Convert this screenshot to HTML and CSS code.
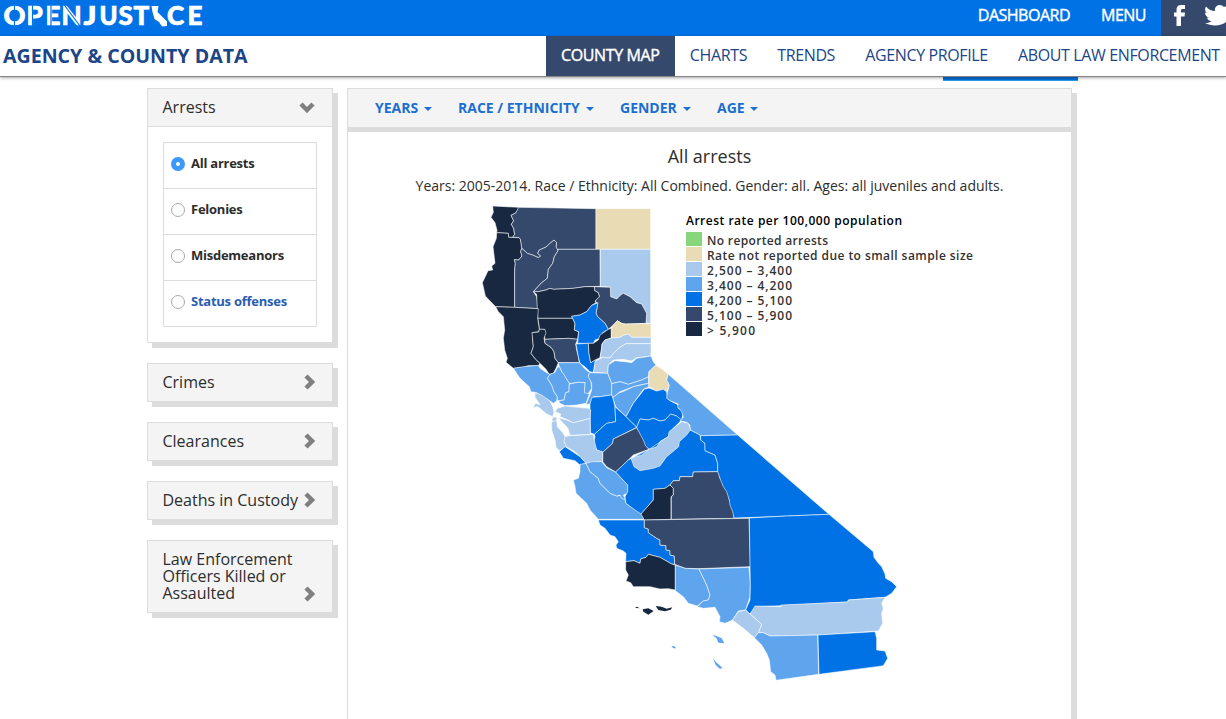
FILE: index.html
```html
<!DOCTYPE html>
<html lang="en">
<head>
<meta charset="utf-8">
<title>OpenJustice - Agency &amp; County Data</title>
<link rel="stylesheet" href="styles.css">
</head>
<body>
<header class="topbar">
  <svg class="logo" width="206" height="36" viewBox="0 0 206 36" role="img" aria-label="OpenJustice">
    <g class="logo-text">
      <text x="3.500" y="25" textLength="22" lengthAdjust="spacingAndGlyphs">O</text>
      <text x="26.500" y="25">P</text><text x="45.500" y="25">E</text><text x="61.500" y="25">N</text>
      <text x="83.500" y="25" textLength="13" lengthAdjust="spacingAndGlyphs">J</text>
      <text x="99.500" y="25" textLength="18" lengthAdjust="spacingAndGlyphs">U</text>
      <text x="118.500" y="25">S</text><text x="133.500" y="25">T</text>
      <text x="167" y="25">C</text><text x="187.500" y="25">E</text>
    </g>
    <path d="M14.500 4V27M32.500 4V27M51 4V27M63.500 4L81.500 28" stroke="#0072e6" stroke-width="1.200" fill="none"/>
    <path d="M151.500 6H158.500L157.500 12L167 21.500V26L162 26.500L159 22L154.500 19L152.500 12Z" fill="#fff"/>
  </svg>
  <nav class="top-links"><a>DASHBOARD</a><a>MENU</a></nav>
  <div class="social">
    <svg width="65" height="36" viewBox="0 0 65 36" fill="#fff">
      <path d="M15.500 26V16.500H13V12.500H15.500V10C15.500 6.500 17 5 20 5H24V9H21.500C20.300 9 20 9.500 20 10.500V12.500H24L23.500 16.500H20V26Z"/>
      <path d="M45 6.500C47.500 9.500 50.500 11 54 11C53.500 7 56 5 59 5C61 5 62 6 63 7L66 6V21C62 26 51 27 44 23C47 23 49 22.500 50.500 21C48 21 46.500 19.500 46 17.800H48C45.500 17 44 15 44 12.500L46 13C44 11.500 43.500 9 45 6.500Z"/>
    </svg>
  </div>
</header>
<div class="subbar">
  <h1 class="section-title">AGENCY &amp; COUNTY DATA</h1>
  <nav class="tabs"><a class="tab tab-active">COUNTY MAP</a><a class="tab">CHARTS</a><a class="tab">TRENDS</a><a class="tab">AGENCY PROFILE</a><a class="tab">ABOUT LAW ENFORCEMENT</a></nav>
</div>
<main class="content">
  <div class="peek"></div>
  <aside class="sidebar">
    <section class="card">
      <div class="card-head"><span>Arrests</span>
        <svg class="chev" width="16" height="12" viewBox="0 0 16 12"><path d="M2 3L8 9L14 3"/></svg></div>
      <div class="card-body">
        <div class="options">
          <label class="option"><i class="radio radio-on"></i>All arrests</label>
          <label class="option"><i class="radio"></i>Felonies</label>
          <label class="option"><i class="radio"></i>Misdemeanors</label>
          <label class="option option-link"><i class="radio"></i>Status offenses</label>
        </div>
      </div>
    </section>
    <section class="card"><div class="card-head"><span>Crimes</span><svg class="chev chev-r" width="12" height="16" viewBox="0 0 12 16"><path d="M3 2L9 8L3 14"/></svg></div></section>
    <section class="card"><div class="card-head"><span>Clearances</span><svg class="chev chev-r" width="12" height="16" viewBox="0 0 12 16"><path d="M3 2L9 8L3 14"/></svg></div></section>
    <section class="card"><div class="card-head"><span>Deaths in Custody</span><svg class="chev chev-r" width="12" height="16" viewBox="0 0 12 16"><path d="M3 2L9 8L3 14"/></svg></div></section>
    <section class="card"><div class="card-head card-tall"><span>Law Enforcement<br>Officers Killed or<br>Assaulted</span><svg class="chev chev-r" width="12" height="16" viewBox="0 0 12 16"><path d="M3 2L9 8L3 14"/></svg></div></section>
  </aside>
  <section class="panel">
    <div class="filters">
      <a class="filter f-years">YEARS<i class="caret"></i></a><a class="filter f-race">RACE / ETHNICITY<i class="caret"></i></a><a class="filter f-gender">GENDER<i class="caret"></i></a><a class="filter f-age">AGE<i class="caret"></i></a>
    </div>
    <h2 class="map-title">All arrests</h2>
    <p class="map-sub">Years: 2005-2014. Race / Ethnicity: All Combined. Gender: all. Ages: all juveniles and adults.</p>
    <svg class="map" width="530" height="490" viewBox="0 0 1590 1470">
      <!-- north -->
      <g class="counties">
        <path class="c5" d="M68 18L146 22 146 27 137 39 123 46 131 62 124 73 131 85 134 103 128 112 116 112 115 100 80 98 81 91 75 68 63 52 70 37Z"/>
        <path class="c4" d="M146 22L378 26 378 148 260 148 258 140 260 128 252 120 240 130 228 141 208 150 203 160 212 168 205 173 190 166 172 160 155 145 151 118 147 113 128 112 134 103 131 85 124 73 131 62 123 46 137 39Z"/>
        <path class="c0" d="M378 26H542V148H378Z"/>
        <path class="c5" d="M80 98L115 100 116 112 147 113 151 118 155 145 152 155 156 168 146 180 133 179 136 190 134 210 134 322 77 320 60 303 46 288 42 270 37 248 48 225 54 212 68 210 65 198 75 190 72 165 69 140 79 115Z"/>
        <path class="c4" d="M155 145L172 160 190 166 205 173 212 168 203 160 208 150 228 141 240 130 252 120 260 128 258 140 264 152 253 170 248 190 235 208 232 235 215 248 190 275 200 290 205 326 134 322 134 210 136 190 133 179 146 180 156 168 152 155Z"/>
        <path class="c4" d="M264 148H390L391 259 345 260 310 265 250 268 240 265 228 270 205 275 190 275 215 248 232 235 235 208 248 190 253 170 264 152Z"/>
        <path class="c1" d="M391 148H542V370H528L530 340 515 312 500 308 480 290 460 280 452 285 440 297 422 290 421 262 391 259Z"/>
        <path class="c4" d="M373 260L421 262 422 290 440 297 452 285 460 280 480 290 500 308 515 312 530 340 528 370 466 372 455 370 442 362 430 375 415 388 405 370 383 350 378 340 383 310 375 303 388 290 385 278 374 272Z"/>
        <path class="c5" d="M200 283L190 275 205 275 228 270 240 265 250 268 310 265 345 260 373 260 374 272 385 278 388 290 375 303 378 308 365 316 350 335 330 345 305 349 308 355 203 355Z"/>
        <path class="c5" d="M203 355H308L315 370 313 390 326 395 323 418 295 415 224 418 224 388 208 388 206 370Z"/>
        <path class="c5" d="M77 320L134 322 205 326 203 355 208 388 206 395 187 398 188 420 190 440 183 460 197 478 210 490 205 497 175 497 160 502 130 505 108 487 112 475 104 450 100 415 104 390 100 350 85 335Z"/>
        <path class="c5" d="M208 388H224L228 398 222 415 225 430 243 442 252 455 255 475 265 488 258 505 250 520 238 523 228 508 210 490 197 478 183 460 190 440 186 398 206 396Z"/>
        <path class="c4" d="M224 418L295 415 323 418 317 432 320 450 325 470 328 488 265 488 255 475 252 455 243 442 225 430Z"/>
        <path class="c3" d="M305 349L330 345 350 335 365 316 384 308 378 340 383 350 405 370 415 388 398 398 390 415 375 420 370 430 323 430 326 395 313 390 315 370Z"/>
        <path class="c3" d="M318 432L355 430 357 460 362 488 378 478 370 517 360 515 345 500 330 490 325 470Z"/>
        <path class="c5" d="M355 430L370 430 385 420 390 405 400 398 415 388 424 385 424 414 405 420 396 432 394 450 390 473 375 480 362 488 357 460Z"/>
        <path class="c0" d="M424 388L430 375 442 362 455 370 466 372 543 371V412H485L475 402 460 406 450 412 424 414Z"/>
        <path class="c1" d="M394 450L396 432 405 420 424 414 450 412 460 406 475 402 485 412 543 412V431H468L450 442 430 460 420 474 398 472 390 473Z"/>
        <path class="c1" d="M543 431H468L450 442 430 460 420 474 398 472 375 484 371 517 413 520 415 495 430 480 460 478 485 483 500 473 543 468Z"/>
      </g>
      <!-- bay area and central valley -->
      <g class="counties" transform="translate(90 420)">
        <path class="c2" d="M323 100L325 75 345 62 375 65 395 68 410 55 430 52 453 48 460 65 468 75 447 95 446 110 425 120 400 128 385 133 360 125 340 130 335 131Z"/>
        <path class="c2" d="M40 85L70 80 115 76 120 85 140 98 150 103 142 115 155 135 162 155 172 170 170 183 160 190 150 183 130 172 110 158 93 155 88 140 60 115Z"/>
        <path class="c2" d="M175 68H240L250 82 262 93 272 98 265 105 273 125 275 145 262 165 252 160 255 128 235 127 215 130 208 130 200 118 185 95 178 80Z"/>
        <path class="c2" d="M150 103L165 97 172 82 178 80 185 95 193 105 200 118 208 130 207 155 197 158 192 180 172 182 172 170 162 155 155 135 142 115Z"/>
        <path class="c2" d="M208 132L235 127 255 128 253 158 268 162 258 190 230 195 195 197 180 190 176 183 192 180 197 158 207 155Z"/>
        <path class="c2" d="M268 98L323 100 335 131 335 165 300 170 280 170 270 192 258 193 268 170 275 150 275 130 265 110Z"/>
        <path class="c2" d="M335 131L360 125 385 133 400 128 425 120 446 110 446 130 420 135 400 140 360 155 338 173 335 165Z"/>
        <path class="c2" d="M338 173L355 160 375 152 400 140 446 130 447 140 430 148 400 190 378 230 347 200 340 180Z"/>
        <path class="c0" d="M467 75L490 90 505 103 500 118 508 135 500 155 490 148 470 153 447 140 446 110 447 95Z"/>
        <path class="c3" d="M276 172L300 170 335 165 340 180 345 200 347 245 320 250 283 283 271 278 270 192Z"/>
        <path class="c3" d="M433 148L447 144 470 153 490 148 500 155 502 175 510 182 535 195 535 205 550 215 545 240 535 235 530 228 512 222 495 240 480 243 460 235 445 240 420 237 410 262 378 230 400 190Z"/>
        <path class="c3" d="M345 200L378 230 410 262 395 270 340 297 338 310 308 337 290 330 280 310 285 290 283 283 320 250 347 245Z"/>
        <path class="c3" d="M410 262L420 237 445 240 460 235 480 243 495 240 512 222 530 228 545 240 520 265 505 290 480 305 470 320 448 328 430 315Z"/>
        <path class="c4" d="M340 297L410 263 430 300 437 318 447 328 400 345 380 365 347 396 320 380 308 365 308 337 338 310Z"/>
        <path class="c1" d="M190 290L210 287 280 283 285 310 290 330 308 335 308 365 275 367 258 370 240 350 225 335 198 320 190 300Z"/>
        <path class="c1" d="M155 245L170 240 172 260 190 280 195 290 192 305 200 320 178 332 168 322 165 300 155 270Z"/>
        <path class="c1" d="M157 232L170 232 170 242 156 244Z"/>
        <path class="c1" d="M175 233L200 240 220 248 270 235 271 283 210 286 204 265 190 250Z"/>
        <path class="c1" d="M172 205L195 198 225 201 265 205 272 210 270 235 220 248 200 238 180 230 182 222 165 215Z"/>
        <path class="c1" d="M105 158L125 165 150 183 158 200 162 215 158 230 140 222 120 205 112 200 98 203 107 190 120 194 105 172Z"/>
        <path class="c3" d="M178 335L195 320 215 333 240 350 258 370 240 375 225 362 190 355Z"/>
        <path class="c2" d="M240 373L258 370 270 395 295 415 300 430 330 460 350 468 370 465 378 490 400 505 425 520 433 538 295 538 270 510 260 490 228 460 225 440 220 420 235 415 240 395Z"/>
        <path class="c2" d="M258 370L275 365 305 365 320 383 347 396 383 435 383 460 370 465 378 480 365 475 360 465 350 468 330 460 300 430 295 415 270 395Z"/>
      </g>
      <!-- sierra and southern valley -->
      <g class="counties" transform="translate(360 540)">
        <path class="c2" d="M235 -17L443 165 332 167 320 160 300 150 300 135 290 127 270 122 280 112 275 95 262 80 265 72 240 62 230 55 232 38 238 15 230 0Z"/>
        <path class="c3" d="M300 150L330 165 332 180 345 190 345 212 375 225 383 250 383 275 310 276 308 290 270 290 268 302 250 302 240 315 225 325 190 328 190 360 153 402 135 390 108 370 105 350 113 335 113 315 77 276 115 240 177 208 250 160Z"/>
        <path class="c1" d="M275 125L295 130 302 148 290 165 268 185 266 200 245 218 230 230 210 258 190 265 150 272 132 260 123 235 155 225 177 208 200 200 210 185 235 170 237 155Z"/>
        <path class="c5" d="M190 328L225 325 240 315 250 325 250 345 243 350 243 418 163 420 153 402 190 360Z"/>
        <path class="c4" d="M250 302H268L270 290 308 290 310 276 385 275 390 295 400 305 405 320 415 335 418 360 430 380 432 415 244 418 244 350 250 345 250 325 240 315Z"/>
      </g>
      <!-- south coast -->
      <g class="counties" transform="translate(270 900)">
        <path class="c3" d="M115 60H253V83L265 87 265 98 290 115 300 120 300 135 318 137 318 150 330 152 330 165 343 168 344 193 335 192 300 172 265 163 258 172 242 177 240 190 222 182 197 185 198 160 190 153 170 145 168 135 175 125 165 110 150 105 135 85 120 75Z"/>
        <path class="c4" d="M253 60L567 55 571 200 418 206 375 205 344 193 343 168 330 165 330 152 318 150 318 137 300 135 300 120 290 115 265 98 265 87 253 83Z"/>
        <path class="c5" d="M197 185L222 182 240 190 242 177 258 172 265 163 300 172 335 192 346 195 346 270 325 266 300 267 270 260 220 260 212 248 198 243 205 225 197 210Z"/>
        <path class="c2" d="M346 195L375 205 417 207 440 255 450 285 445 300 430 303 412 318 385 310 370 290 346 272Z"/>
        <path class="c2" d="M417 207L567 202 571 250 570 290 557 330 535 333 518 360 495 370 478 365 480 350 465 322 430 325 412 320 430 303 445 300 450 285 440 255Z"/>
        <g class="islands">
          <path class="c5" d="M224 323L232 320 238 325ZM248 328L265 325 281 333 265 344 250 335ZM287 318L305 320 320 326 337 322 332 329 315 334 295 330Z"/>
          <path class="c2" d="M457 405L470 408 485 415 493 430 475 428 469 414ZM334 439L342 438 349 445 340 445ZM459 475L470 488 487 503 480 507 467 495Z"/>
        </g>
      </g>
      <!-- desert and border -->
      <g class="counties" transform="translate(750 660)">
        <path class="c3" d="M-58 47L53 45 327 283 200 288 100 292 42 294 38 275 30 255 28 240 20 215 10 200 0 175 -7 155 -7 130 -15 105 -45 92 -45 70 -58 60Z"/>
        <path class="c3" d="M88 294L200 288 327 283 460 395 462 412 475 430 485 440 495 462 497 475 515 485 530 500 515 520 495 532 385 540 383 546 183 557 110 560 90 582 77 570 90 540 91 500Z"/>
        <path class="c1" d="M90 582L105 558 183 560 183 555 383 546 385 540 495 532 485 550 490 565 485 580 488 610 475 633 300 645 150 648 130 638 115 638 125 613Z"/>
        <path class="c1" d="M37 600L55 575 77 570 90 582 125 613 115 638 103 653 70 625Z"/>
        <path class="c2" d="M103 653L115 638 130 638 150 648 293 645 296 763 168 781 165 765 152 755 148 720 140 700 125 675Z"/>
        <path class="c3" d="M294 645L465 635 470 655 470 690 495 693 503 715 490 737 470 740 297 763Z"/>
      </g>
      <g class="legend" transform="scale(3) translate(-470 -200)">
        <text class="legend-title" x="686" y="225" textLength="216">Arrest rate per 100,000 population</text>
        <rect class="c6" x="686" y="232" width="16" height="14"/><text x="707" y="245" textLength="121">No reported arrests</text>
        <rect class="c0" x="686" y="247" width="16" height="14"/><text x="707" y="260" textLength="266">Rate not reported due to small sample size</text>
        <rect class="c1" x="686" y="262" width="16" height="14"/><text x="707" y="275" textLength="85">2,500 – 3,400</text>
        <rect class="c2" x="686" y="277" width="16" height="14"/><text x="707" y="290" textLength="85">3,400 – 4,200</text>
        <rect class="c3" x="686" y="292" width="16" height="14"/><text x="707" y="305" textLength="85">4,200 – 5,100</text>
        <rect class="c4" x="686" y="307" width="16" height="14"/><text x="707" y="320" textLength="85">5,100 – 5,900</text>
        <rect class="c5" x="686" y="322" width="16" height="14"/><text x="707" y="335" textLength="48">&gt; 5,900</text>
      </g>
    </svg>
  </section>
</main>
</body>
</html>
```
FILE: styles.css
```css
* { box-sizing: border-box; }
body { margin: 0; width: 1226px; height: 719px; overflow: hidden; background: #fff; color: #2d2d2d; font-family: "Open Sans", "Noto Sans", sans-serif; }
.topbar { display: flex; height: 36px; background: #0072e6; }
.logo-text { fill: #fff; stroke: #fff; stroke-width: .7; font: 900 26px Lato, sans-serif; }
.top-links { margin-left: auto; display: flex; gap: 31px; padding-right: 15px; color: #fff; font-size: 16px; letter-spacing: -.5px; line-height: 31px; -webkit-text-stroke: .4px #fff; }
.social { width: 65px; background: #34496c; overflow: hidden; }
.subbar { position: relative; z-index: 2; display: flex; justify-content: space-between; height: 41px; background: #fff; border-bottom: 1px solid #858585; box-shadow: 0 1px 3px rgba(0,0,0,.35); }
.section-title { margin: 0; padding-left: 3px; color: #1c4587; font-size: 19.6px; line-height: 40px; font-weight: 700; white-space: nowrap; }
.tabs { display: flex; margin-right: -9px; }
.tab { padding: 0 15.2px 0 15px; color: #1c4587; font-size: 16px; letter-spacing: -.37px; line-height: 39px; white-space: nowrap; }
.tab-active { background: #34496c; color: #fff; -webkit-text-stroke: .4px #fff; }
.content { position: relative; display: flex; align-items: flex-start; gap: 15px; padding: 11px 0 0 147px; }
.peek { position: absolute; left: 943px; top: -2px; width: 135px; height: 6px; background: #0070d8; border-bottom: 1px solid #2b9be0; }
.sidebar { width: 185px; display: flex; flex-direction: column; gap: 20px; }
.card { width: 186px; border: 1px solid #dcdcdc; background: #fff; box-shadow: 5px 5px 0 #dcdcdc; }
.card-head { display: flex; justify-content: space-between; align-items: center; height: 37px; padding: 0 17px 1px 14.5px; background: #f4f4f4; font-size: 16px; line-height: 17px; white-space: nowrap; }
.card-tall { height: 71px; align-items: flex-end; padding-bottom: 10px; }
.chev { flex: none; fill: none; stroke: #808080; stroke-width: 4.5; }
.card-body { border-top: 1px solid #dcdcdc; padding: 15px; }
.options { border: 1px solid #dcdcdc; }
.option { display: flex; height: 46px; padding: 0 0 5px 7px; align-items: center; gap: 6px; font-size: 13px; letter-spacing: -.25px; font-weight: 700; border-bottom: 1px solid #dcdcdc; }
.option:last-child { border: 0; height: 45px; }
.option-link { color: #2a5db0; }
.radio { width: 14px; height: 14px; border: 1px solid #a8a8a8; border-radius: 50%; position: relative; top: 1px; }
.radio-on { border: 5px solid #3b99fc; }
.panel { width: 725px; height: 660px; border: 1px solid #dcdcdc; box-shadow: 5px 5px 0 #dcdcdc; display: flex; flex-direction: column; align-items: center; }
.filters { align-self: stretch; height: 43px; display: flex; padding-left: 27px; border-bottom: 5px solid #dcdcdc; background: #f4f4f4; color: #1b6fd0; font-size: 14px; font-weight: 700; line-height: 38px; }
.filter { display: flex; justify-content: space-between; align-items: center; white-space: nowrap; }
.f-years { width: 57px; margin-right: 26px; }
.f-race { width: 136px; margin-right: 26px; }
.f-gender { width: 71px; margin-right: 26px; }
.f-age { width: 41px; }
.caret { border: 4px solid transparent; border-top-color: #1b6fd0; border-bottom: 0; margin-top: 2px; }
.map-title { margin: 12px 0 0; font-size: 18px; line-height: 24px; font-weight: 400; }
.map-sub { margin: 8px 0 0; font-size: 14px; line-height: 20px; white-space: nowrap; }
.map { align-self: flex-start; flex: none; margin: 4px 0 0 122px; }
.counties path { stroke: rgba(255,255,255,.62); stroke-width: 2.7; stroke-linejoin: round; }
.counties .islands path { stroke: none; }
.c0 { fill: #e9dbb3; }
.c1 { fill: #a9caed; }
.c2 { fill: #5fa5ee; }
.c3 { fill: #0072e6; }
.c4 { fill: #34496c; }
.c5 { fill: #182840; }
.c6 { fill: #87d67c; }
.legend text { font-size: 12px; font-weight: 600; fill: #333; }
.legend .legend-title { fill: #000; }
```
